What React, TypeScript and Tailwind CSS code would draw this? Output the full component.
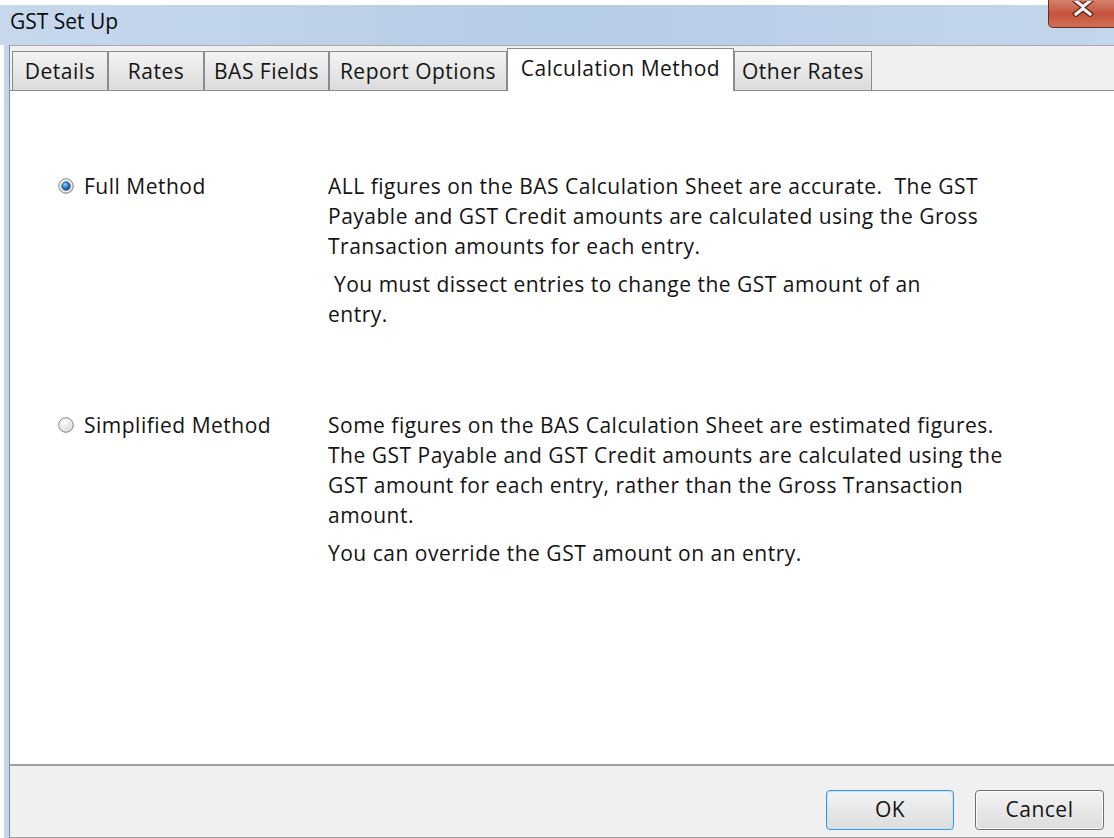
import React from "react";

const fullLines = [
  "ALL figures on the BAS Calculation Sheet are accurate.\u00a0 The GST",
  "Payable and GST Credit amounts are calculated using the Gross",
  "Transaction amounts for each entry.",
];
const fullLines2 = ["\u00a0You must dissect entries to change the GST amount of an", "entry."];

const simpleLines = [
  "Some figures on the BAS Calculation Sheet are estimated figures.",
  "The GST Payable and GST Credit amounts are calculated using the",
  "GST amount for each entry, rather than the Gross Transaction",
  "amount.",
];
const simpleLines2 = ["You can override the GST amount on an entry."];

function Radio({ checked }: { checked: boolean }) {
  const ring = checked ? "rg-on" : "rg-off";
  return (
    <svg width="16" height="16" viewBox="0 0 16 16" className="shrink-0">
      <defs>
        <radialGradient id={ring} cx="0.4" cy="0.35" r="0.75">
          <stop offset="0" stopColor="#ffffff" />
          <stop offset="0.6" stopColor="#e2e2e2" />
          <stop offset="1" stopColor="#b8b8b8" />
        </radialGradient>
        <radialGradient id="dot" cx="0.4" cy="0.35" r="0.7">
          <stop offset="0" stopColor="#9ad0f6" />
          <stop offset="0.5" stopColor="#2f7cc2" />
          <stop offset="1" stopColor="#134677" />
        </radialGradient>
      </defs>
      <circle cx="8" cy="8" r="7.3" fill={`url(#${ring})`} stroke="#8b8b8b" strokeWidth="1" />
      <circle cx="8" cy="8" r="5.8" fill="none" stroke="#f6f6f6" strokeWidth="0.8" />
      {checked && <circle cx="8" cy="8" r="4.4" fill="url(#dot)" stroke="#1f4f80" strokeWidth="0.5" />}
    </svg>
  );
}

function Tab({ label, active, w }: { label: string; active?: boolean; w: string }) {
  if (active) {
    return (
      <div
        className={`${w} h-[43px] -mb-px bg-white border border-b-0 border-[#898c95] flex items-start justify-center pt-[4px] relative z-10`}
      >
        {label}
      </div>
    );
  }
  return (
    <div
      className={`${w} h-[39px] mt-[4px] bg-gradient-to-b from-[#f3f3f3] to-[#dcdcdc] border border-b-0 border-[#898c95] flex items-center justify-center pt-[1px]`}
    >
      {label}
    </div>
  );
}

export default function App() {
  return (
    <div
      className="w-[1114px] h-[838px] bg-white overflow-hidden relative text-[#141414] text-[21px] tracking-[0.5px]"
      style={{ fontFamily: '"Open Sans", "Noto Sans", sans-serif' }}
    >
      {/* title bar */}
      <div className="h-[45px] pt-[5px] bg-white">
        <div className="h-[40px] bg-gradient-to-r from-[#c6d8ec] via-[#b6cde6] to-[#c3d6ec] relative">
          <div className="absolute left-[10px] top-[1px] text-[#0a0a0a] tracking-normal">GST Set Up</div>
        </div>
      </div>
      <div className="absolute left-[1048px] top-0 w-[80px] h-[28px] rounded-bl-[5px] border border-t-0 border-[#6b2a22] bg-gradient-to-b from-[#d4826c] via-[#c4533c] to-[#d06f54] flex items-start justify-start pl-[22px] pt-[1px]">
        <svg width="24" height="16" viewBox="0 0 24 16">
          <path d="M5 0 L12 5.5 L19 0 M5 13 L12 7.5 L19 13" stroke="#5a1e16" strokeWidth="5.5" fill="none" strokeLinecap="square" />
          <path d="M5 0 L12 5.5 L19 0 M5 13 L12 7.5 L19 13" stroke="#f4f4f4" strokeWidth="3.2" fill="none" strokeLinecap="square" />
        </svg>
      </div>

      {/* window body */}
      <div className="flex h-[793px]">
        <div className="w-[4px] bg-white" />
        <div className="w-[5px] bg-[#c2d5ec]" />
        <div className="flex-1 flex flex-col border-l border-[#8b8d91] bg-[#f0f0f0]">
          <div className="border-t border-[#a7a9ad]" />
          {/* tab strip */}
          <div className="h-[44px] flex items-end pl-[2px]">
            <Tab label="Details" w="w-[96px]" />
            <Tab label="Rates" w="w-[96px]" />
            <Tab label="BAS Fields" w="w-[125px]" />
            <Tab label="Report Options" w="w-[178px]" />
            <Tab label="Calculation Method" active w="w-[227px]" />
            <Tab label="Other Rates" w="w-[138px]" />
          </div>
          {/* tab page */}
          <div className="h-[674px] bg-white border-t border-[#898c95] relative">
            <div className="grid grid-cols-[270px_1fr] pl-[48px] pt-[80px] leading-[30px]">
              <div className="flex items-center gap-[10px] h-[30px]">
                <Radio checked />
                <span>Full Method</span>
              </div>
              <div>
                {fullLines.map((l) => (
                  <div key={l} className="whitespace-pre">{l}</div>
                ))}
                <div className="h-[8px]" />
                {fullLines2.map((l) => (
                  <div key={l} className="whitespace-pre">{l}</div>
                ))}
              </div>
              <div className="flex items-center gap-[10px] h-[30px] mt-[81px]">
                <Radio checked={false} />
                <span>Simplified Method</span>
              </div>
              <div className="mt-[81px]">
                {simpleLines.map((l) => (
                  <div key={l} className="whitespace-pre">{l}</div>
                ))}
                <div className="h-[8px]" />
                {simpleLines2.map((l) => (
                  <div key={l} className="whitespace-pre">{l}</div>
                ))}
              </div>
            </div>
          </div>
          {/* button row */}
          <div className="flex-1 border-t-2 border-[#a0a0a0] flex justify-end items-start gap-[21px] pt-[24px] pr-[10px] border-b border-b-[#a0a0a0]">
            <button className="w-[128px] h-[40px] rounded-[4px] border border-[#3c9ad8] bg-gradient-to-b from-[#f3f3f3] to-[#dddddd] shadow-[inset_0_0_0_1px_#bfe3f8]">
              OK
            </button>
            <button className="w-[129px] h-[40px] rounded-[4px] border border-[#707070] bg-gradient-to-b from-[#f3f3f3] to-[#dddddd] shadow-[inset_0_0_0_1px_#fcfcfc]">
              Cancel
            </button>
          </div>
        </div>
      </div>
    </div>
  );
}
